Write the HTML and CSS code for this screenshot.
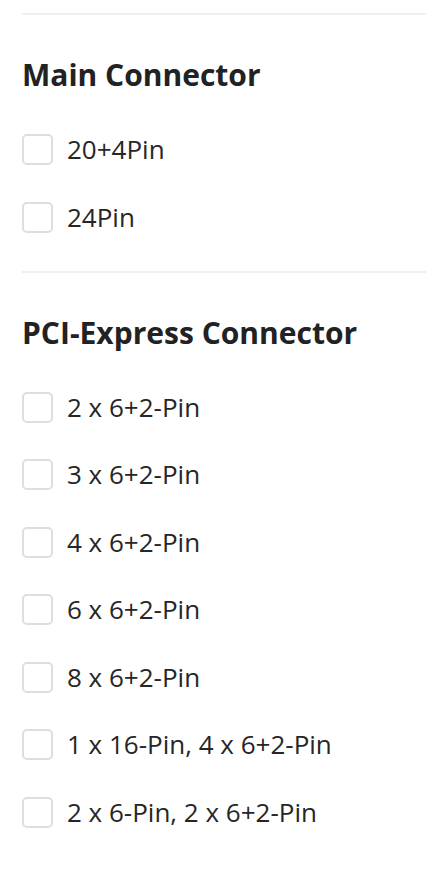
FILE: index.html
```html
<!DOCTYPE html>
<html lang="en">
<head>
<meta charset="utf-8">
<link rel="stylesheet" href="styles.css">
</head>
<body>
<div class="filters">
  <section class="group">
    <h2 class="group-title">Main Connector</h2>
    <ul class="options">
      <li class="option"><span class="box"></span><span class="label">20+4Pin</span></li>
      <li class="option"><span class="box"></span><span class="label">24Pin</span></li>
    </ul>
  </section>
  <section class="group">
    <h2 class="group-title">PCI-Express Connector</h2>
    <ul class="options">
      <li class="option"><span class="box"></span><span class="label">2 x 6+2-Pin</span></li>
      <li class="option"><span class="box"></span><span class="label">3 x 6+2-Pin</span></li>
      <li class="option"><span class="box"></span><span class="label">4 x 6+2-Pin</span></li>
      <li class="option"><span class="box"></span><span class="label">6 x 6+2-Pin</span></li>
      <li class="option"><span class="box"></span><span class="label">8 x 6+2-Pin</span></li>
      <li class="option"><span class="box"></span><span class="label">1 x 16-Pin, 4 x 6+2-Pin</span></li>
      <li class="option"><span class="box"></span><span class="label">2 x 6-Pin, 2 x 6+2-Pin</span></li>
    </ul>
  </section>
</div>
</body>
</html>
```
FILE: styles.css
```css
html, body {
  margin: 0;
  padding: 0;
  background: #ffffff;
}
body {
  font-family: "Open Sans", "Liberation Sans", sans-serif;
  color: #222222;
}
.filters {
  padding: 13px 0 0 22px;
}
.group {
  border-top: 2px solid #efefef;
  padding-top: 41px;
  padding-bottom: 2px;
}
.group-title {
  margin: 0 0 40px 0;
  font-size: 30px;
  line-height: 38px;
  font-weight: 700;
  color: #222222;
}
.options {
  list-style: none;
  margin: 0;
  padding: 0;
  display: flex;
  flex-direction: column;
  gap: 36.5px;
}
.option {
  display: flex;
  align-items: center;
  gap: 14px;
  height: 31px;
}
.option:last-child {
  margin-bottom: 36px;
}
.box {
  box-sizing: border-box;
  width: 31px;
  height: 31px;
  border: 2px solid #dedede;
  border-radius: 5px;
  flex: none;
}
.label {
  font-size: 26px;
  line-height: 31px;
  color: #262626;
}
```
